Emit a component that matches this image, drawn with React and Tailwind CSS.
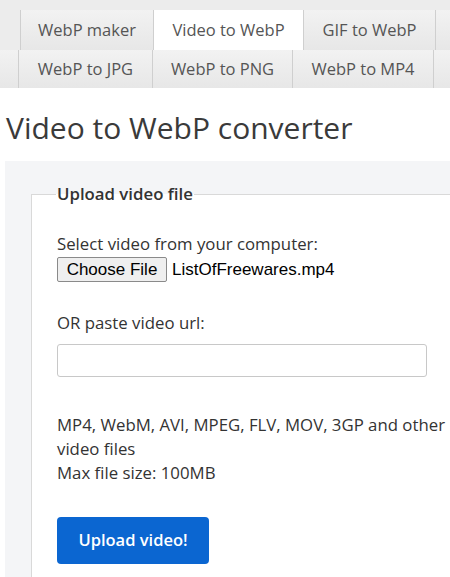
const topTabs = [
    { label: 'WebP maker', w: 'w-[133px]' },
    { label: 'Video to WebP', w: 'w-[150px]', active: true },
    { label: 'GIF to WebP', w: 'w-[132px]' },
    { label: '', w: 'w-[130px]' },
];

const bottomTabs = [
    { label: 'GIF to PDF', w: 'w-[120px]' },
    { label: 'WebP to JPG', w: 'w-[134px]' },
    { label: 'WebP to PNG', w: 'w-[140px]' },
    { label: 'WebP to MP4', w: 'w-[141px]' },
    { label: '', w: 'w-[140px]' },
];

const Tab = ({ label, w, active, h }) => (
    <a
        href="#"
        className={`${w} ${h} flex shrink-0 items-center justify-center border-l border-[#cfcfcf] text-[16.5px] whitespace-nowrap text-[#555] ${
            active ? 'bg-white' : 'bg-gradient-to-b from-[#f2f2f2] to-[#e7e7e7]'
        }`}
    >
        {label}
    </a>
);

export default function App() {
    return (
        <div className="h-[577px] w-[450px] overflow-hidden bg-white font-['Open_Sans',sans-serif] text-[#333]">
            <nav className="bg-[#ececec] pt-[10px]">
                <div className="flex h-[40px] pl-[20px]">
                    {topTabs.map((t, i) => (
                        <Tab key={i} {...t} h="h-[40px]" />
                    ))}
                </div>
                <div className="ml-[-102px] flex h-[38px]">
                    {bottomTabs.map((t, i) => (
                        <Tab key={i} {...t} h="h-[38px]" />
                    ))}
                </div>
            </nav>

            <h1 className="mt-[20px] ml-[6px] text-[30px] leading-[40px] font-normal whitespace-nowrap text-[#3a3a3a]">
                Video to WebP converter
            </h1>

            <section className="mt-[13px] ml-[5px] w-[520px] bg-[#f4f5f7] pt-[21px] pl-[26px]">
                <fieldset className="border-t border-l border-[#d9d9d9] bg-white pt-[26px] pb-[20px] pl-[25px]">
                    <legend className="ml-[-1px] px-[1px] text-[16.8px] leading-[24px] font-semibold text-[#333]">
                        Upload video file
                    </legend>

                    <p className="text-[16.8px] leading-[24px]">Select video from your computer:</p>
                    <div className="mt-px flex items-center gap-[5px]">
                        <button
                            type="button"
                            className="h-[25px] w-[110px] rounded-[2px] border border-[#8a8a8a] bg-[#efefef] font-['Liberation_Sans',sans-serif] text-[17px] leading-none text-black"
                        >
                            Choose File
                        </button>
                        <span className="font-['Liberation_Sans',sans-serif] text-[17px] text-black">ListOfFreewares.mp4</span>
                    </div>

                    <p className="mt-[28px] text-[16.8px] leading-[24px]">OR paste video url:</p>
                    <input
                        type="text"
                        className="mt-[9px] block h-[33px] w-[370px] rounded-[3px] border border-[#c8c8c8] bg-white"
                    />

                    <p className="mt-[36px] text-[16.8px] leading-[24px] whitespace-nowrap">
                        MP4, WebM, AVI, MPEG, FLV, MOV, 3GP and other
                        <br />
                        video files
                        <br />
                        Max file size: 100MB
                    </p>

                    <button
                        type="button"
                        className="mt-[32px] h-[47px] w-[152px] rounded-[4px] bg-[#0b66d1] text-[16.5px] font-semibold text-white"
                    >
                        Upload video!
                    </button>
                </fieldset>
            </section>
        </div>
    );
}
